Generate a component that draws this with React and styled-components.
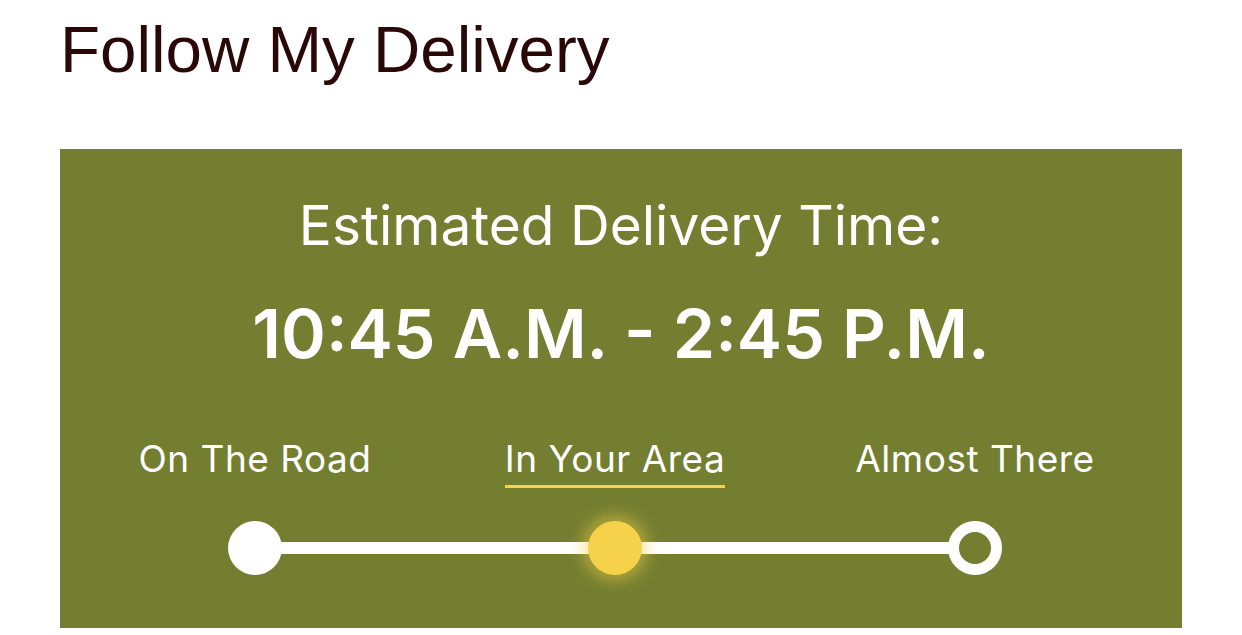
import React from 'react'
import styled, { createGlobalStyle } from 'styled-components';

const steps = [
    { label: 'On The Road', state: 'done' },
    { label: 'In Your Area', state: 'current' },
    { label: 'Almost There', state: 'next' },
];

const App = () => {
    return (
        <Page>
            <GlobalStyle />
            <Title>Follow My Delivery</Title>
            <Panel>
                <Subtitle>Estimated Delivery Time:</Subtitle>
                <TimeRange>10:45 A.M. - 2:45 P.M.</TimeRange>
                <Steps>
                    {steps.map((s) => (
                        <Step key={s.label}>
                            <StepLabel $active={s.state === 'current'}>{s.label}</StepLabel>
                        </Step>
                    ))}
                </Steps>
                <Track>
                    {steps.map((s, i) => (
                        <Stop key={s.label} $first={i === 0} $last={i === steps.length - 1}>
                            <Dot $state={s.state} />
                        </Stop>
                    ))}
                </Track>
            </Panel>
        </Page>
    )
}

const GlobalStyle = createGlobalStyle`
    body {
        margin: 0;
        background: #ffffff;
    }
`;

const Page = styled.div`
    padding: 16px 60px 0;
`;

const Title = styled.h1`
    margin: 0 0 66px;
    font-family: "Liberation Sans", Arial, sans-serif;
    font-weight: 400;
    font-size: 65.5px;
    line-height: 67px;
    color: #2b0808;
`;

const Panel = styled.section`
    background-color: #737e30;
    height: 479px;
    color: #ffffff;
    font-family: Inter, "Noto Sans", sans-serif;
    display: flex;
    flex-direction: column;
    align-items: center;
    padding-top: 46px;
    box-sizing: border-box;
`;

const Subtitle = styled.div`
    font-size: 55px;
    line-height: 60px;
    font-weight: 400;
`;

const TimeRange = styled.div`
    margin-top: 38px;
    font-size: 68px;
    line-height: 80px;
    font-weight: 600;
`;

const Steps = styled.div`
    align-self: stretch;
    display: grid;
    grid-template-columns: repeat(3, 360px);
    padding: 0 27px 0 15px;
    justify-content: center;
    margin-top: 63px;
`;

const Step = styled.div`
    display: flex;
    justify-content: center;
`;

const StepLabel = styled.span`
    font-size: 37px;
    line-height: 46px;
    letter-spacing: 0.5px;
    padding-bottom: 3px;
    border-bottom: 3px solid ${(p) => (p.$active ? '#f6d24a' : 'transparent')};
`;

const Track = styled.div`
    align-self: stretch;
    display: grid;
    grid-template-columns: repeat(3, 360px);
    padding: 0 27px 0 15px;
    justify-content: center;
    margin-top: 33px;
`;

/* each stop carries half of the connecting line on either side */
const Stop = styled.div`
    position: relative;
    height: 54px;
    display: flex;
    justify-content: center;
    align-items: center;

    &::before, &::after {
        content: '';
        position: absolute;
        top: 21px;
        height: 12px;
        width: 50%;
        background: #ffffff;
    }
    &::before {
        left: 0;
        display: ${(p) => (p.$first ? 'none' : 'block')};
    }
    &::after {
        right: 0;
        display: ${(p) => (p.$last ? 'none' : 'block')};
    }
`;

const Dot = styled.span`
    position: relative;
    z-index: 1;
    width: 54px;
    height: 54px;
    border-radius: 50%;
    box-sizing: border-box;
    background: ${(p) => (p.$state === 'current' ? '#f6d24a' : p.$state === 'next' ? '#737e30' : '#ffffff')};
    border: ${(p) => (p.$state === 'next' ? '11px solid #ffffff' : 'none')};
    box-shadow: ${(p) => (p.$state === 'current' ? '0 0 16px 6px rgba(246, 210, 74, 0.5)' : 'none')};
`;

export default App
